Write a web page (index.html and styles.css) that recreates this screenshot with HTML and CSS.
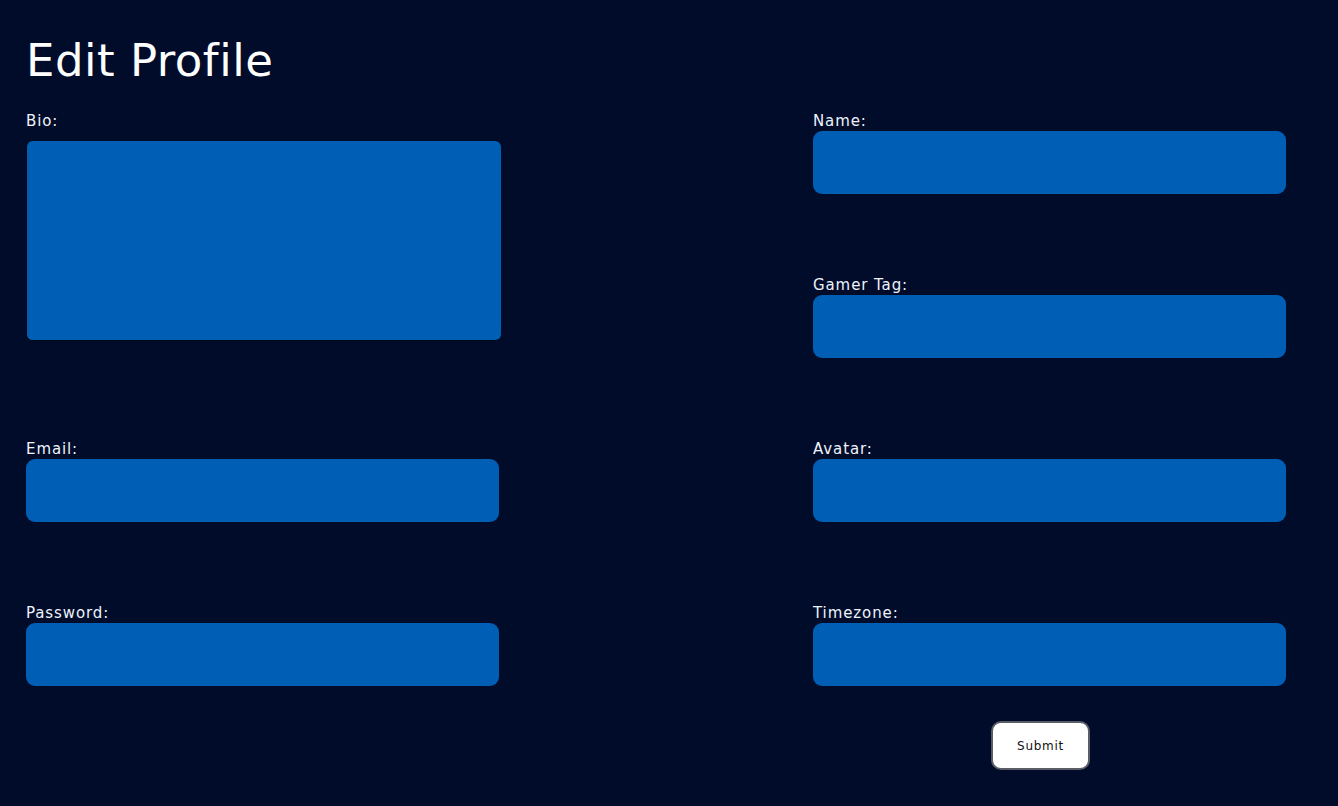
FILE: index.html
```html
<!DOCTYPE html>
<html lang="en">
<head>
<meta charset="utf-8">
<title>Edit Profile</title>
<link rel="stylesheet" href="styles.css">
</head>
<body>
<main class="page">
  <h1 class="title">Edit Profile</h1>
  <form class="form">
    <div class="field field-bio">
      <label class="label" for="bio">Bio:</label>
      <textarea class="textarea" id="bio"></textarea>
    </div>
    <div class="field">
      <label class="label" for="name">Name:</label>
      <input class="input" id="name" type="text">
    </div>
    <div class="field">
      <label class="label" for="tag">Gamer Tag:</label>
      <input class="input" id="tag" type="text">
    </div>
    <div class="field">
      <label class="label" for="email">Email:</label>
      <input class="input" id="email" type="text">
    </div>
    <div class="field">
      <label class="label" for="avatar">Avatar:</label>
      <input class="input" id="avatar" type="text">
    </div>
    <div class="field">
      <label class="label" for="password">Password:</label>
      <input class="input" id="password" type="password">
    </div>
    <div class="field">
      <label class="label" for="tz">Timezone:</label>
      <input class="input" id="tz" type="text">
    </div>
    <div class="actions">
      <button class="submit" type="button">Submit</button>
    </div>
  </form>
</main>
</body>
</html>
```
FILE: styles.css
```css
html, body {
  margin: 0;
  padding: 0;
  background: #000c2a;
}
body {
  font-family: "DejaVu Sans", "Liberation Sans", sans-serif;
  color: #eef3fa;
  min-height: 806px;
}
.page {
  padding: 35px 0 0 26px;
}
.title {
  margin: 0;
  font-size: 45px;
  font-weight: normal;
  line-height: 52px;
  letter-spacing: 0.5px;
  color: #ffffff;
}
.form {
  margin-top: 26px;
  display: grid;
  grid-template-columns: 787px 1fr;
  grid-auto-flow: row dense;
  row-gap: 83px;
}
.field {
  display: flex;
  flex-direction: column;
  align-items: flex-start;
}
.field-bio {
  grid-row: span 2;
}
.label {
  font-size: 15px;
  line-height: 17px;
  height: 18px;
  letter-spacing: 0.9px;
  color: #eef3fa;
}
.input {
  box-sizing: border-box;
  width: 473px;
  height: 63px;
  border: none;
  border-radius: 9px;
  background: #005eb4;
  margin: 0;
  padding: 0 12px;
}
.textarea {
  box-sizing: border-box;
  width: 475px;
  height: 200px;
  margin-top: 10px;
  border: none;
  border-left: 1px solid #000814;
  border-bottom: 1px solid #000814;
  border-radius: 6px;
  background: #005eb4;
  resize: none;
}
.actions {
  grid-column: 2;
  margin-top: -48px;
  padding-left: 178px;
}
.submit {
  box-sizing: border-box;
  width: 99px;
  height: 49px;
  background: #ffffff;
  border: 2px solid #5a5d66;
  border-radius: 10px;
  font-family: "DejaVu Sans", "Liberation Sans", sans-serif;
  font-size: 12px;
  letter-spacing: 0.7px;
  color: #101010;
  cursor: pointer;
}
```
